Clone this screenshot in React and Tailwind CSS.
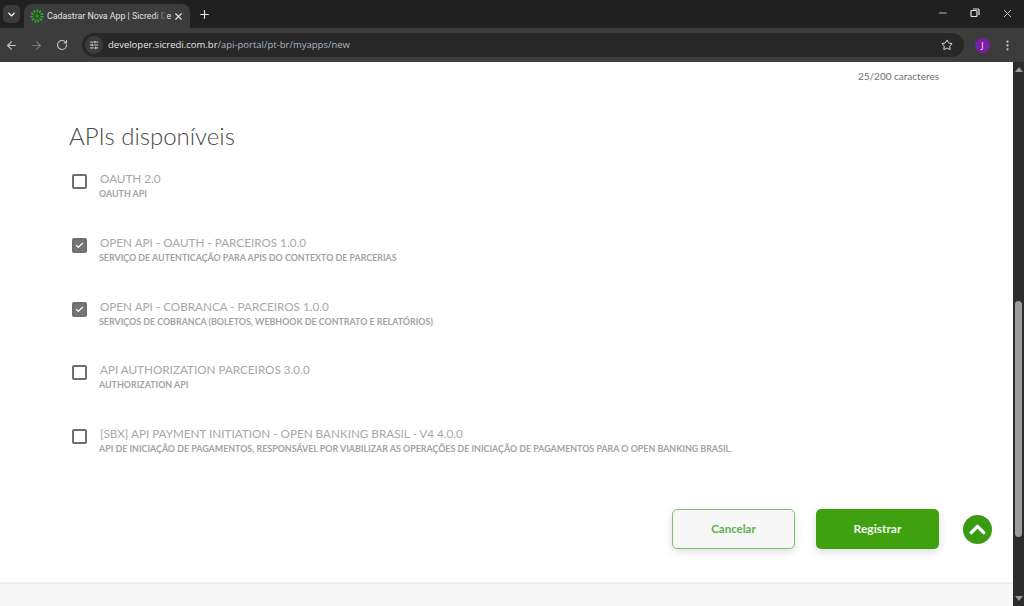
import React from 'react';
import { Check, ChevronDown, ChevronUp, ArrowLeft, ArrowRight, RotateCw, Star, X, Plus, Minus, EllipsisVertical, SlidersHorizontal } from 'lucide-react';

const apis = [
    { name: "OAUTH 2.0", desc: "OAUTH API", checked: false },
    { name: "OPEN API - OAUTH - PARCEIROS 1.0.0", desc: "SERVIÇO DE AUTENTICAÇÃO PARA APIS DO CONTEXTO DE PARCERIAS", checked: true },
    { name: "OPEN API - COBRANCA - PARCEIROS 1.0.0", desc: "SERVIÇOS DE COBRANCA (BOLETOS, WEBHOOK DE CONTRATO E RELATÓRIOS)", checked: true },
    { name: "API AUTHORIZATION PARCEIROS 3.0.0", desc: "AUTHORIZATION API", checked: false },
    { name: "[SBX] API PAYMENT INITIATION - OPEN BANKING BRASIL - V4 4.0.0", desc: "API DE INICIAÇÃO DE PAGAMENTOS, RESPONSÁVEL POR VIABILIZAR AS OPERAÇÕES DE INICIAÇÃO DE PAGAMENTOS PARA O OPEN BANKING BRASIL.", checked: false },
];

const Favicon = () => (
    <svg width="14" height="14" viewBox="0 0 14 14" className="shrink-0">
        <circle cx="7" cy="7" r="5" fill="none" stroke="#2fa82a" strokeWidth="3.2" strokeDasharray="1.6 1.2" />
        <circle cx="7" cy="7" r="2" fill="#1f8f1a" />
    </svg>
);

const BrowserBar = () => (
    <div className="shrink-0 font-['Open_Sans',sans-serif]">
        <div className="h-[28px] bg-[#202020] flex items-end pl-[3px]">
            <div className="w-[17px] h-[18px] mb-[5px] mr-[4px] rounded-[5px] bg-[#3a3a3a] flex items-center justify-center text-white">
                <ChevronDown size={11} strokeWidth={3} />
            </div>
            <div className="w-[166px] h-[24px] bg-[#3c3c3c] rounded-t-[8px] flex items-center pl-[6px] pr-[6px]">
                <Favicon />
                <span className="relative ml-[3px] w-[120px] whitespace-nowrap font-['Roboto',sans-serif] text-[8.8px] leading-[13px] text-[#e3e3e3]">
                    Cadastrar Nova App | Sicredi De
                    <span className="absolute right-0 top-0 h-full w-[12px] bg-gradient-to-r from-transparent to-[#3c3c3c]"></span>
                </span>
                <X size={11} strokeWidth={2.5} className="ml-auto text-[#e3e3e3]" />
            </div>
            <Plus size={13} strokeWidth={2.2} className="ml-[8px] mb-[7px] text-[#e3e3e3]" />
            <div className="ml-auto flex items-center h-full pb-[2px] text-[#e3e3e3]">
                <Minus size={12} strokeWidth={1.5} className="mr-[21px]" />
                <svg width="10" height="10" viewBox="0 0 10 10" fill="none" stroke="currentColor" className="mr-[21px]">
                    <rect x="1" y="2.5" width="6" height="6" rx="1" strokeWidth="1.2" />
                    <path d="M3 1h5a1 1 0 0 1 1 1v5" strokeWidth="1.2" />
                </svg>
                <X size={13} strokeWidth={1.5} className="mr-[10px]" />
            </div>
        </div>
        <div className="h-[34px] bg-[#3c3c3c] flex items-center pl-[5px] text-[#c7c7c7]">
            <ArrowLeft size={13} strokeWidth={2} />
            <ArrowRight size={13} strokeWidth={2} className="ml-[12px] text-[#7a7a7a]" />
            <RotateCw size={12} strokeWidth={2.2} className="ml-[13px]" />
            <div className="ml-[14px] w-[882px] h-[24px] rounded-full bg-[#282828] flex items-center pl-[3px] pr-[11px]">
                <div className="w-[18px] h-[18px] rounded-full bg-[#3c3c3c] flex items-center justify-center text-[#e3e3e3]">
                    <SlidersHorizontal size={10} strokeWidth={2} />
                </div>
                <span className="ml-[5px] text-[9.5px] text-[#a9b4c0]"><span className="text-[#e3e3e3]">developer.sicredi.com.br</span>/api-portal/pt-br/myapps/new</span>
                <Star size={12} strokeWidth={2} className="ml-auto text-[#e3e3e3]" />
            </div>
            <div className="ml-[11px] w-[15px] h-[15px] rounded-full bg-[#7b1fa2] flex items-center justify-center text-[8px] text-[#e6cdf0] font-semibold">J</div>
            <EllipsisVertical size={13} strokeWidth={2.2} className="ml-[11px] text-[#c7c7c7]" />
        </div>
    </div>
);

const ApiRow = ({ api }) => (
    <div className="h-[63.75px] flex items-start">
        <div className={`mt-[2px] w-[15px] h-[15px] rounded-[2px] border-2 border-[#6e6e6e] flex items-center justify-center shrink-0 ${api.checked ? "bg-[#757575]" : "bg-white"}`}>
            {api.checked && <Check size={9} strokeWidth={3} className="text-white" />}
        </div>
        <div className="ml-[12px] -mt-[2px] min-w-0">
            <p className="ml-[1px] text-[11.7px] leading-[17px] text-[#a8a8a8] whitespace-nowrap">{api.name}</p>
            <p className="mt-[1px] text-[8.9px] leading-[12px] font-bold text-[#a3a3a3] whitespace-nowrap">{api.desc}</p>
        </div>
    </div>
);

const App = () => {
    return (
        <div className="w-[1024px] h-[606px] overflow-hidden flex flex-col bg-white">
            <BrowserBar />
            <div className="flex-1 flex min-h-0">
                <main className="flex-1 flex flex-col font-['Lato',sans-serif]">
                    <div className="flex-1 pl-[72px] pr-[74px]">
                        <p className="mt-[7px] text-right text-[10px] leading-[14px] text-[#6f6f6f]">25/200 caracteres</p>
                        <h1 className="-ml-[3px] mt-[38px] text-[24px] leading-[30px] font-light text-[#4a4a4a]">APIs disponíveis</h1>
                        <div className="mt-[21px]">
                            {apis.map((api) => <ApiRow key={api.name} api={api} />)}
                        </div>
                        <div className="mt-[18px] flex items-center justify-end">
                            <button className="w-[123px] h-[40px] rounded-[5px] border border-[#7cc26c] bg-[#f7f7f7] text-[11.5px] font-bold text-[#62ad4d] shadow-[0_3px_8px_rgba(0,0,0,0.12)]">Cancelar</button>
                            <button className="ml-[21px] w-[123px] h-[40px] rounded-[5px] bg-[#3fa110] text-[12px] font-bold text-[#f2f7ee] shadow-[0_3px_8px_rgba(0,0,0,0.14)]">Registrar</button>
                            <div className="relative w-0 h-0">
                                <button className="absolute left-[24px] -top-[14px] w-[29px] h-[29px] rounded-full bg-[#3a9a12] flex items-center justify-center text-white">
                                    <ChevronUp size={25} strokeWidth={3.2} />
                                </button>
                            </div>
                        </div>
                    </div>
                    <div className="h-[24px] shrink-0 border-t-2 border-[#ececec] bg-[#f7f7f7]"></div>
                </main>
                <div className="w-[11px] shrink-0 bg-[#2c2c2c] flex flex-col items-center">
                    <div className="mt-[5px] w-0 h-0 border-x-[4px] border-x-transparent border-b-[5px] border-b-[#9a9a9a]"></div>
                    <div className="mt-[229px] w-[7px] h-[236px] rounded-full bg-[#9c9c9c]"></div>
                    <div className="mt-auto mb-[5px] w-0 h-0 border-x-[4px] border-x-transparent border-t-[5px] border-t-[#9a9a9a]"></div>
                </div>
            </div>
        </div>
    );
};

export default App;
